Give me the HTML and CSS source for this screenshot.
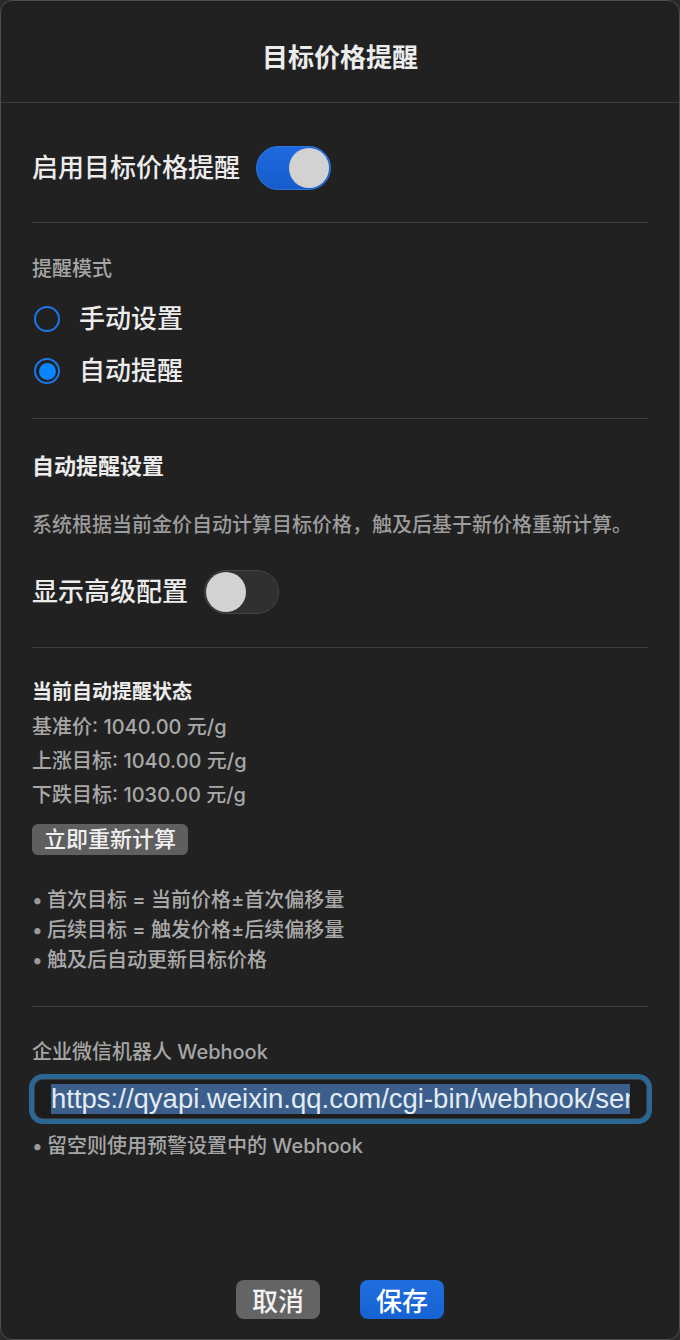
FILE: index.html
```html
<!DOCTYPE html>
<html lang="zh">
<head>
<meta charset="utf-8">
<title>目标价格提醒</title>
<link rel="stylesheet" href="styles.css">
</head>
<body>
<div class="window">
  <header class="header"><h1 class="title">目标价格提醒</h1></header>
  <main class="content">
    <div class="row row-first">
      <span class="big">启用目标价格提醒</span>
      <span class="toggle toggle-on"><span class="knob"></span></span>
    </div>
    <div class="divider d1"></div>

    <div class="label l-mode">提醒模式</div>
    <div class="radio-row r1"><span class="radio"></span><span class="big">手动设置</span></div>
    <div class="radio-row r2"><span class="radio radio-on"><span class="dot"></span></span><span class="big">自动提醒</span></div>
    <div class="divider d2"></div>

    <div class="section-title">自动提醒设置</div>
    <div class="desc">系统根据当前金价自动计算目标价格，触及后基于新价格重新计算。</div>
    <div class="row row-adv">
      <span class="big">显示高级配置</span>
      <span class="toggle toggle-off"><span class="knob"></span></span>
    </div>
    <div class="divider d3"></div>

    <div class="status-title">当前自动提醒状态</div>
    <div class="status-lines">
      <div class="status-line">基准价: 1040.00 元/g</div>
      <div class="status-line">上涨目标: 1040.00 元/g</div>
      <div class="status-line">下跌目标: 1030.00 元/g</div>
    </div>
    <div class="btn-wrap"><span class="btn-small">立即重新计算</span></div>
    <ul class="bullets">
      <li><span class="dotc">•</span>首次目标 = 当前价格±首次偏移量</li>
      <li><span class="dotc">•</span>后续目标 = 触发价格±后续偏移量</li>
      <li><span class="dotc">•</span>触及后自动更新目标价格</li>
    </ul>
    <div class="divider d4"></div>

    <div class="label l-hook">企业微信机器人 Webhook</div>
    <div class="input"><div class="clip"><span class="sel">https://qyapi.weixin.qq.com/cgi-bin/webhook/send?key=</span></div></div>
    <div class="hint"><span class="dotc">•</span>留空则使用预警设置中的 Webhook</div>
  </main>
  <footer class="footer">
    <span class="btn btn-cancel">取消</span>
    <span class="btn btn-save">保存</span>
  </footer>
</div>
</body>
</html>
```
FILE: styles.css
```css
* { box-sizing: border-box; }
html, body { margin: 0; padding: 0; }
body {
  background: #2a2a2a;
  font-family: "Inter", "Noto Sans CJK SC", sans-serif;
  font-weight: 500;
  color: #e6e6e6;
}
.window {
  width: 680px;
  height: 1340px;
  background: #212121;
  border: 1px solid #4e4e4e;
  border-radius: 12px;
  display: flex;
  flex-direction: column;
  overflow: hidden;
}
.header {
  height: 102px;
  border-bottom: 1px solid #3d3d3d;
  display: flex;
  align-items: center;
  justify-content: center;
  padding-top: 12px;
}
.title {
  margin: 0;
  font-size: 26px;
  font-weight: bold;
  color: #ececec;
  line-height: 30px;
}
.content {
  padding: 0 31px;
  display: flex;
  flex-direction: column;
}
.big { font-size: 26px; line-height: 30px; color: #ececec; }
.row { display: flex; align-items: center; height: 44px; gap: 16px; }
.row-first { margin-top: 43px; }
.row-adv { margin-top: 33px; }
.divider { height: 1px; background: #3f3f3f; }
.d1 { margin-top: 32px; }
.d2 { margin-top: 27px; }
.d3 { margin-top: 33px; }
.d4 { margin-top: 31px; }

.toggle {
  position: relative;
  width: 75px;
  height: 44px;
  border-radius: 22px;
  display: inline-block;
}
.toggle-on { background: linear-gradient(#1f6ae0, #165ccb); border: 1px solid #2f74dc; }
.toggle-off { background: #303030; border: 1px solid #474747; }
.knob {
  position: absolute;
  top: 1px;
  width: 40px;
  height: 40px;
  border-radius: 50%;
  background: #d2d2d2;
}
.toggle-on .knob { right: 1px; }
.toggle-off .knob { left: 1px; }

.label { font-size: 20px; line-height: 24px; color: #a6a6a6; }
.l-mode { margin-top: 34px; }
.l-hook { margin-top: 33px; }
.radio-row { display: flex; align-items: center; height: 40px; gap: 19px; }
.r1 { margin-top: 18px; }
.r2 { margin-top: 12px; }
.radio {
  width: 26px;
  height: 26px;
  border-radius: 50%;
  border: 2.5px solid #1a78e6;
  margin-left: 2px;
  display: flex;
  align-items: center;
  justify-content: center;
}
.radio-on .dot {
  width: 17px;
  height: 17px;
  border-radius: 50%;
  background: #0a84ff;
}

.section-title { margin-top: 34px; font-size: 22px; font-weight: bold; line-height: 26px; color: #ececec; }
.desc { margin-top: 34px; font-size: 20px; line-height: 24px; color: #9c9c9c; }

.status-title { margin-top: 32px; font-size: 20px; font-weight: bold; line-height: 24px; color: #ececec; }
.status-lines { margin-top: 6px; }
.status-line { font-size: 20px; line-height: 34px; color: #a8a8a8; }
.btn-wrap { margin-top: 12px; height: 31px; }
.btn-small {
  display: inline-block;
  height: 31px;
  line-height: 31px;
  padding: 0 12px;
  background: #5f5f5f;
  border-radius: 6px;
  font-size: 22px;
  color: #f0f0f0;
  vertical-align: top;
}
.bullets { list-style: none; margin: 30px 0 0; padding: 0; }
.bullets li { font-size: 20px; line-height: 30px; height: 30px; color: #aaaaaa; }
.dotc { display: inline-block; width: 15px; color: #9a9a9a; }

.input {
  margin-top: 15px;
  height: 40px;
  margin-left: 2px;
  margin-right: 1px;
  background: #1c1c1c;
  border: 1px solid #3a3a3a;
  border-radius: 9px;
  box-shadow: 0 0 0 5px #2b6795;
  padding: 4px 16px 0 16px;
}
.clip { white-space: nowrap; overflow: hidden; height: 30px; }
.sel {
  display: inline-block;
  background: #3b5f8a;
  color: #e3ebf5;
  font-size: 27.5px;
  line-height: 30px;
  font-weight: normal;
  font-family: "Liberation Sans", sans-serif;
}
.hint { margin-top: 15px; font-size: 20px; line-height: 24px; height: 24px; color: #a6a6a6; }

.footer {
  margin-top: auto;
  padding-bottom: 20px;
  display: flex;
  justify-content: center;
  gap: 40px;
}
.btn {
  width: 84px;
  height: 39px;
  border-radius: 8px;
  display: flex;
  align-items: center;
  justify-content: center;
  font-size: 26px;
  color: #f2f2f2;
}
.btn-cancel { background: #646464; }
.btn-save { background: linear-gradient(#1f6ee0, #1762d2); color: #ffffff; }
```
